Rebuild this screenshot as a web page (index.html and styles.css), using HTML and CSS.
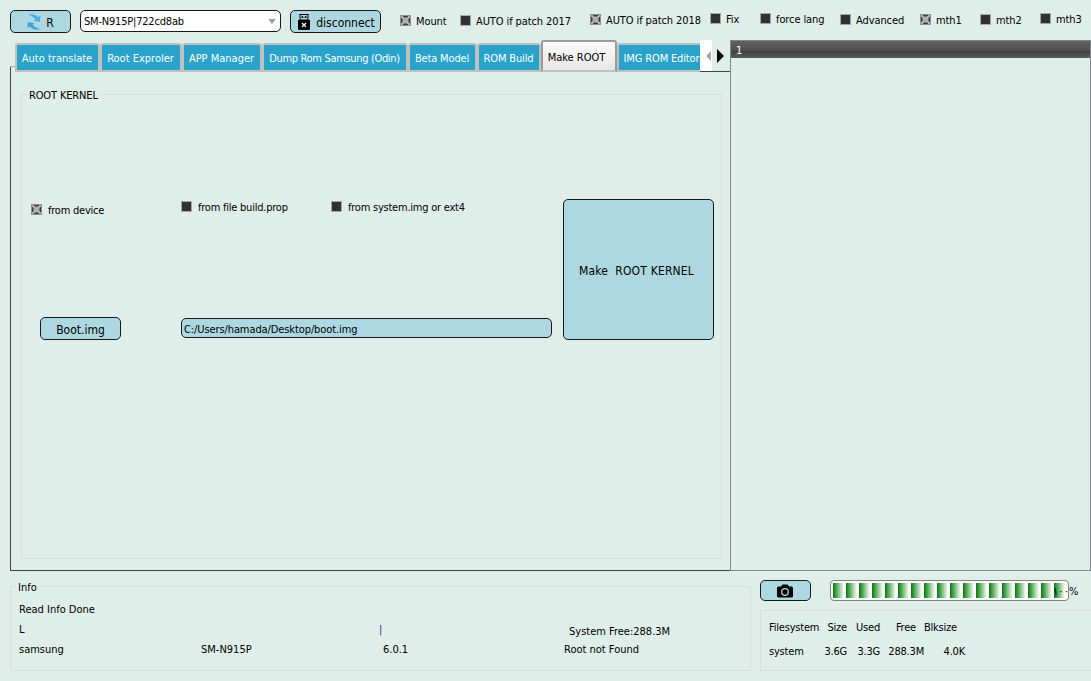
FILE: index.html
```
<!DOCTYPE html>
<html lang="en">
<head>
    <meta charset="UTF-8">
    <title>Root Kernel</title>
    <link rel="stylesheet" href="styles.css">
</head>
<body>

<div class="toolbar">
    <button class="button refresh">
        <svg width="14" height="16" viewBox="0 0 14 16">
            <path d="M1 .500C5 -.300 9 .500 11 3.300L13.500 1.800L12.800 8L6.500 6.800L8.300 5.200C6.800 3 4.500 1.500 1 .500Z" fill="#4aaee6"/>
            <path d="M13.500 15C9 16.300 5 15.200 3 12.400L.500 13.800L.800 8L7.500 9L5.700 10.600C7 12.800 9.500 14.300 13.500 15Z" fill="#3ba3e0"/>
        </svg>
        <span>R</span>
    </button>
    <div class="combo"><span>SM-N915P|722cd8ab</span><i class="combo-arrow"></i></div>
    <button class="button disconnect">
        <svg width="12" height="16" viewBox="0 0 12 16">
            <path d="M1.500 0H10.500V6H12V14.500Q12 16 10.500 16H1.500Q0 16 0 14.500V6H1.500Z" fill="#000"/>
            <path d="M2.500 1H9.500V5.500H2.500Z" fill="#add8e1"/>
            <path d="M3.500 2.200H5.300V4H3.500ZM6.700 2.200H8.500V4H6.700Z" fill="#000"/>
            <path d="M4 9L8 13M8 9L4 13" stroke="#fff" stroke-width="1.300"/>
        </svg>
        <span>disconnect</span>
    </button>
    <div class="options">
        <label class="check low"><i class="box on"></i>Mount</label>
        <label class="check low"><i class="box"></i>AUTO if patch 2017</label>
        <label class="check"><i class="box on"></i>AUTO if patch 2018</label>
        <label class="check high"><i class="box"></i>Fix</label>
        <label class="check high"><i class="box"></i>force lang</label>
        <label class="check"><i class="box"></i>Advanced</label>
        <label class="check"><i class="box on"></i>mth1</label>
        <label class="check"><i class="box"></i>mth2</label>
        <label class="check high"><i class="box"></i>mth3</label>
    </div>
</div>

<div class="main">
    <div class="left">
        <div class="tabbar">
            <div class="tabs">
                <div class="tab t1"><span>Auto translate</span></div>
                <div class="tab t2"><span>Root Exproler</span></div>
                <div class="tab t3"><span>APP Manager</span></div>
                <div class="tab t4"><span>Dump Rom Samsung (Odin)</span></div>
                <div class="tab t5"><span>Beta Model</span></div>
                <div class="tab t6"><span>ROM Build</span></div>
                <div class="tab t7 active"><span>Make ROOT</span></div>
                <div class="tab t8"><span>IMG ROM Editor</span></div>
            </div>
            <div class="scroll prev"><i></i></div>
            <div class="scroll next"><i></i></div>
        </div>
        <div class="page">
            <fieldset class="group kernel">
                <legend>ROOT KERNEL</legend>
                <div class="kernel-form">
                    <div class="sources">
                        <label class="check device"><i class="box on"></i>from device</label>
                        <label class="check"><i class="box"></i>from file build.prop</label>
                        <label class="check"><i class="box"></i>from system.img or ext4</label>
                    </div>
                    <div class="file">
                        <button class="button boot"><span>Boot.img</span></button>
                        <div class="path">C:/Users/hamada/Desktop/boot.img</div>
                    </div>
                </div>
                <button class="button make"><span>Make&nbsp; ROOT KERNEL</span></button>
            </fieldset>
        </div>
    </div>
    <div class="log">
        <div class="log-header">1</div>
    </div>
</div>

<div class="bottom">
    <fieldset class="group info">
        <legend>Info</legend>
        <div class="info-grid">
            <span class="wide">Read Info Done</span>
            <span>L</span><span></span><span class="bar">|</span><span class="free">System Free:288.3M</span>
            <span>samsung</span><span>SM-N915P</span><span>6.0.1</span><span>Root not Found</span>
        </div>
    </fieldset>
    <div class="status">
        <div class="status-row">
            <button class="button camera">
                <svg width="16" height="14" viewBox="0 0 16 14">
                    <path d="M1.500 2.500H4L5.500 .5H10.500L12 2.500H14.500Q16 2.500 16 4V12Q16 13.500 14.500 13.500H1.500Q0 13.500 0 12V4Q0 2.500 1.500 2.500Z" fill="#000"/>
                    <circle cx="8" cy="8" r="3.300" fill="none" stroke="#add8e1" stroke-width="1.300"/>
                </svg>
            </button>
            <div class="progress"><div class="chunks"></div></div>
            <span class="percent"><span class="digits">١٠٠</span>%</span>
        </div>
        <div class="disk">
            <span class="fs">Filesystem</span><span>Size</span><span>Used</span><span>Free</span><span>Blksize</span>
            <span class="fs">system</span><span>3.6G</span><span>3.3G</span><span>288.3M</span><span class="blk">4.0K</span>
        </div>
    </div>
</div>

</body>
</html>
```
FILE: styles.css
```
* {
    box-sizing: border-box;
}

body {
    margin: 0;
    width: 1091px;
    height: 681px;
    overflow: hidden;
    background-color: #dfeee9;
    color: #000;
    font-family: Tahoma, "DejaVu Sans Condensed", "DejaVu Sans", sans-serif;
    font-size: 11px;
    line-height: 16px;
    white-space: nowrap;
}

.button {
    display: flex;
    align-items: center;
    justify-content: center;
    padding: 0;
    border: 1px solid #1a1a1a;
    border-radius: 5px;
    background-color: #add8e1;
    color: #000;
    font-family: inherit;
    font-size: 12px;
    white-space: nowrap;
}

.button span {
    padding-top: 2px;
}

/* toolbar */
.toolbar {
    display: flex;
    align-items: flex-start;
    height: 40px;
    padding: 10px 0 0 10px;
}

.refresh {
    width: 61px;
    height: 23px;
    gap: 5px;
    margin-right: 9px;
}

.combo {
    display: flex;
    align-items: center;
    justify-content: space-between;
    width: 201px;
    height: 22px;
    margin-right: 9px;
    padding: 1px 4px 0 3px;
    border: 1px solid #1a1a1a;
    border-radius: 5px;
    background-color: #fff;
    letter-spacing: -0.2px;
}

.combo span {
    padding-top: 1px;
}

.combo-arrow {
    border: 4px solid transparent;
    border-top: 5px solid #a0a0a0;
    border-bottom: 0;
}

.disconnect {
    width: 91px;
    height: 23px;
    gap: 6px;
    margin-right: 19px;
    padding-left: 2px;
}

.options {
    display: grid;
    grid-template-columns: 60px 130px 120px 50px 80px 80px 60px 60px 51px;
    align-items: start;
}

.check {
    display: flex;
    align-items: flex-start;
    gap: 5px;
    height: 14px;
    margin-top: 3px;
    letter-spacing: -0.1px;
}

.check.low {
    margin-top: 4px;
}

.check.high {
    margin-top: 2px;
}

.box {
    flex: none;
    width: 11px;
    height: 11px;
    margin-top: 1px;
    border: 1px solid #a6a6a6;
    background-color: #313131;
}

.box.on {
    border-color: #8e908f;
    background:
        linear-gradient(45deg, transparent 42%, #b0b0ac 42%, #b0b0ac 58%, transparent 58%),
        linear-gradient(135deg, transparent 42%, #b0b0ac 42%, #b0b0ac 58%, transparent 58%),
        radial-gradient(#a6a6a2 38%, #3c3c3c 60%);
}

/* tabs and panels */
.main {
    display: flex;
    height: 531px;
}

.left {
    display: flex;
    flex-direction: column;
    width: 720px;
    margin-left: 10px;
}

.tabbar {
    display: flex;
    height: 32px;
}

.tabs {
    display: flex;
    align-items: flex-end;
    width: 690px;
    height: 32px;
    padding-left: 5px;
    overflow: hidden;
    background: linear-gradient(#444, #444) 0 27px / 1px 5px no-repeat,
                linear-gradient(#a5a8a8, #a5a8a8) 0 26px / 5px 1px no-repeat;
}

.tab {
    display: flex;
    flex: none;
    align-items: center;
    justify-content: center;
    height: 29px;
    padding: 2px 1px 0 0;
    border: 2px solid #bfc1c1;
    border-radius: 3px 3px 0 0;
    background-color: #2aa3cb;
    color: #fff;
}

.tab.active {
    height: 32px;
    padding: 3px 5px 0 0;
    border-color: #9b9b9f;
    border-bottom-color: #bfc1c1;
    background: linear-gradient(#fbfbfb, #e7e7e7);
    color: #000;
}

.t1 { width: 85px; }
.t2 { width: 82px; }
.t3 { width: 80px; }
.t4 { width: 146px; letter-spacing: -0.33px; }
.t5 { width: 69px; letter-spacing: -0.15px; }
.t6 { width: 64px; letter-spacing: -0.15px; }
.t7 { width: 76px; }
.t8 { width: 90px; letter-spacing: -0.15px; }

.scroll {
    display: flex;
    align-items: center;
    height: 32px;
    border-bottom: 1px solid #444;
}

.prev {
    width: 12px;
    padding-right: 1px;
    justify-content: flex-end;
    background-color: #fff;
}

.next {
    width: 18px;
    padding-right: 2px;
    justify-content: center;
}

.prev i {
    border: 5px solid transparent;
    border-right-color: #a6a6a6;
    border-left: 0;
}

.next i {
    border: 7px solid transparent;
    border-left-color: #000;
    border-right: 0;
}

.page {
    flex: 1;
    padding: 15px 8px 11px 10px;
    border-left: 1px solid #444;
    border-bottom: 1px solid #444;
}

.group {
    min-width: 0;
    margin: 0;
    padding: 0;
    border: 1px solid #dcdcdc;
}

.group legend {
    height: 14px;
    margin-left: 5px;
    padding: 0 2px;
    line-height: 18px;
}

.kernel {
    display: flex;
    align-items: flex-start;
    height: 472px;
}

.kernel legend {
    letter-spacing: -0.15px;
}

.kernel-form {
    width: 541px;
    padding-top: 99px;
}

.sources {
    display: grid;
    grid-template-columns: 150px 150px auto;
    height: 117px;
    padding-left: 9px;
}

.sources .check {
    gap: 6px;
    margin-top: 0;
    letter-spacing: -0.23px;
}

.sources .device {
    margin-top: 3px;
}

.file {
    display: flex;
    align-items: flex-start;
    padding-left: 18px;
    gap: 60px;
}

.boot {
    width: 81px;
    height: 23px;
}

.path {
    width: 371px;
    height: 20px;
    margin-top: 1px;
    padding: 3px 2px 0;
    border: 1px solid #1a1a1a;
    border-radius: 5px;
    background-color: #add8e1;
    letter-spacing: -0.1px;
}

.make {
    width: 151px;
    height: 141px;
    margin-top: 98px;
    padding-right: 4px;
    letter-spacing: 0.18px;
}

.log {
    flex: 1;
    border: 1px solid #82878f;
}

.log-header {
    height: 17px;
    padding: 2px 5px 0;
    background: linear-gradient(#616161, #505050 55%, #404040 60%, #5a5a5a);
    color: #fff;
}

/* bottom area */
.bottom {
    display: flex;
    gap: 9px;
    height: 110px;
    padding: 8px 0 0 10px;
}

.info {
    width: 741px;
    height: 92px;
}

.info-grid {
    display: grid;
    grid-template-columns: 182px 182px 181px auto;
    grid-auto-rows: 20px;
    padding: 9px 0 0 8px;
}

.wide {
    grid-column: 1 / 5;
}

.bar {
    margin-left: -4px;
    color: #223380;
}

.free {
    padding: 2px 0 0 5px;
}

.status {
    width: 331px;
    padding-top: 1px;
}

.status-row {
    display: flex;
    align-items: center;
    height: 21px;
}

.camera {
    width: 51px;
    height: 21px;
    margin-right: 19px;
    padding-right: 2px;
}

.progress {
    width: 239px;
    height: 21px;
    padding: 2px;
    border: 1px solid #808080;
    border-radius: 4px;
    background-color: #fff;
}

.chunks {
    height: 15px;
    background: repeating-linear-gradient(90deg, #007c08 0, #fff 11px, #fff 13px);
}

/* the value runs over the end of the bar */
.percent {
    margin-left: -16px;
    padding-top: 2px;
}

.digits {
    letter-spacing: 1.8px;
}

.disk {
    display: grid;
    grid-template-columns: 53px 25px 33px 44px 41px;
    grid-auto-rows: 24px;
    justify-items: end;
    height: 61px;
    margin-top: 9px;
    padding: 9px 0 0 8px;
    border: 1px solid #dcdcdc;
    border-right: 0;
    letter-spacing: -0.2px;
}

/* headers do not line up with their values */
.disk span:nth-child(4) {
    margin-right: 8px;
}

.disk span:nth-child(5) {
    margin-right: 8px;
}

.disk .fs {
    justify-self: start;
}
```
